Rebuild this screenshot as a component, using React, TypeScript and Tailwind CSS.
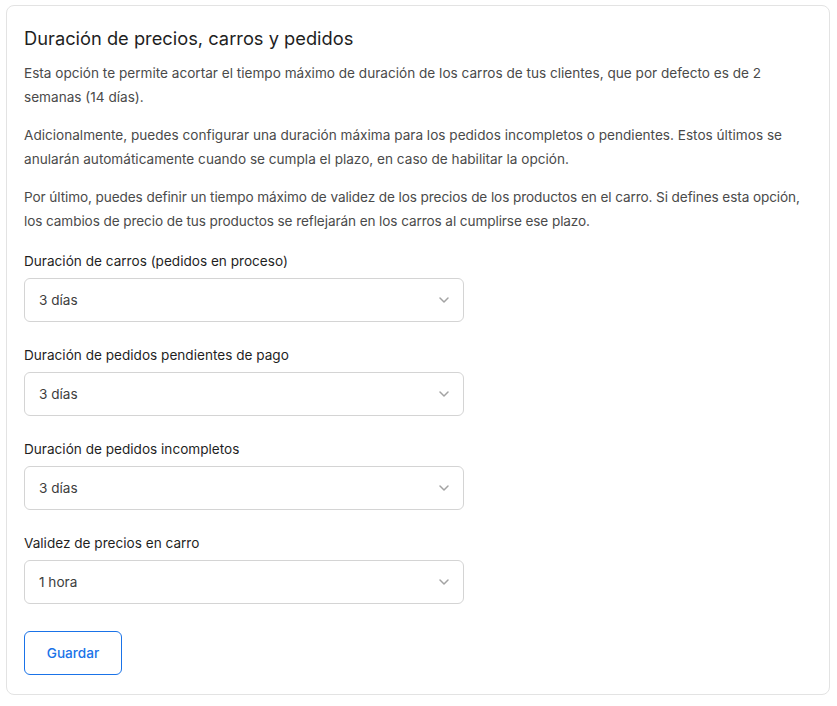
import React from "react";

const fields = [
  { label: "Duración de carros (pedidos en proceso)", value: "3 días" },
  { label: "Duración de pedidos pendientes de pago", value: "3 días" },
  { label: "Duración de pedidos incompletos", value: "3 días" },
  { label: "Validez de precios en carro", value: "1 hora" },
];

function Chevron() {
  return (
    <svg width="12" height="8" viewBox="0 0 12 8" fill="none">
      <path d="M2 2l4 4 4-4" stroke="#a3a3a3" strokeWidth="1.5" strokeLinecap="round" strokeLinejoin="round" />
    </svg>
  );
}

function SelectBox({ value }: { value: string }) {
  return (
    <div className="flex h-[44px] w-[440px] items-center justify-between rounded-[6px] border border-[#d4d4d4] bg-white pl-[14px] pr-[13px] text-[13.6px] text-[#3d3d3d]">
      <span>{value}</span>
      <Chevron />
    </div>
  );
}

export default function App() {
  return (
    <div className="min-h-screen bg-white pt-[5px] pl-[6px]" style={{ fontFamily: "Inter, 'Noto Sans', sans-serif" }}>
      <div className="w-[824px] rounded-[8px] border border-[#e3e3e3] bg-white px-[17px] pt-[18px] pb-[19px]">
        <h2 className="mb-[9px] text-[18.3px] leading-7 font-normal text-[#1f1f1f]">Duración de precios, carros y pedidos</h2>
        <div className="flex flex-col gap-[14px] text-[13.6px] leading-6 text-[#4a4a4a]">
          <p>
            Esta opción te permite acortar el tiempo máximo de duración de los carros de tus clientes, que por defecto es de 2 semanas (14 días).
          </p>
          <p>
            Adicionalmente, puedes configurar una duración máxima para los pedidos incompletos o pendientes. Estos últimos se anularán automáticamente cuando se cumpla el plazo, en caso de habilitar la opción.
          </p>
          <p className="tracking-[-0.1px]">
            Por último, puedes definir un tiempo máximo de validez de los precios de los productos en el carro. Si defines esta opción, los cambios de precio de tus productos se reflejarán en los carros al cumplirse ese plazo.
          </p>
        </div>
        <div className="mt-[18px] flex flex-col gap-[23px]">
          {fields.map((f) => (
            <div key={f.label} className="flex flex-col gap-[7px]">
              <label className="text-[13.6px] leading-5 text-[#1f1f1f]">{f.label}</label>
              <SelectBox value={f.value} />
            </div>
          ))}
        </div>
        <button className="mt-[27px] h-[44px] w-[98px] rounded-[6px] border border-[#1a73e8] bg-white text-[13.6px] font-medium text-[#1a73e8]">
          Guardar
        </button>
      </div>
    </div>
  );
}
